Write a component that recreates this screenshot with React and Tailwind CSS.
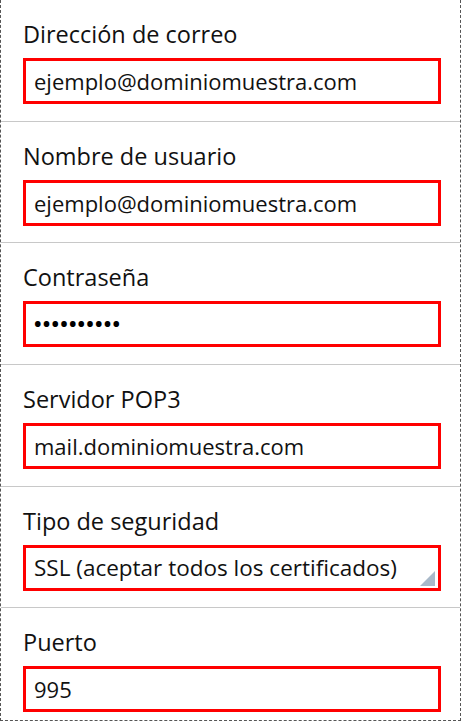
const FIELDS = [
  { label: 'Dirección de correo', value: 'ejemplo@dominiomuestra.com', h: 'h-[122px]' },
  { label: 'Nombre de usuario', value: 'ejemplo@dominiomuestra.com', h: 'h-[121px]' },
  { label: 'Contraseña', value: '••••••••••', password: true, h: 'h-[122px]' },
  { label: 'Servidor POP3', value: 'mail.dominiomuestra.com', h: 'h-[122px]' },
  { label: 'Tipo de seguridad', value: 'SSL (aceptar todos los certificados)', select: true, h: 'h-[121px]' },
  { label: 'Puerto', value: '995', last: true, h: 'h-[113px]' },
];

const Field = ({ label, value, password, select, last, h }) => (
  <div className={`${h} px-[22px] pt-[19px] ${last ? '' : 'border-b border-[#c8c8c8]'}`}>
    <p className="mb-[9px] h-[30px] text-[23.5px] leading-[30px] text-[#111]">{label}</p>
    <div className="relative flex h-[46px] w-[418px] items-center border-[3px] border-[#ff0000] pl-[8px]">
      {password ? (
        <span className="text-[20px] font-bold tracking-[1.2px] text-black">{value}</span>
      ) : (
        <span className={`${select ? 'text-[22.5px]' : 'text-[22px]'} text-[#111]`}>{value}</span>
      )}
      {select && (
        <svg className="absolute bottom-[2px] right-[3px]" width="15" height="15" viewBox="0 0 15 15">
          <path d="M15 0 L15 15 L0 15 Z" fill="#a9b9c9" />
        </svg>
      )}
    </div>
  </div>
);

export default function App() {
  return (
    <div
      className="h-[721px] w-[461px] border-x border-b border-dashed border-[#555] bg-white"
      style={{ fontFamily: '"Open Sans", "Noto Sans", sans-serif' }}
    >
      {FIELDS.map((f, i) => (
        <Field key={i} {...f} />
      ))}
    </div>
  );
}
